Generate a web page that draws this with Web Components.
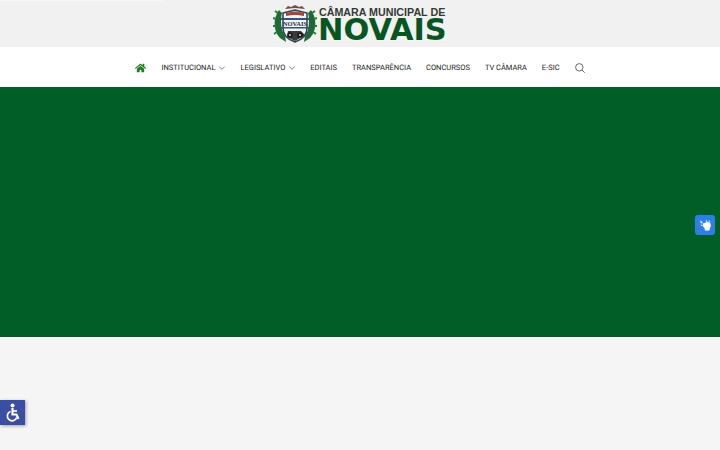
<!DOCTYPE html>
<html lang="pt-BR">
<head>
<meta charset="utf-8">
<title>Câmara Municipal de Novais</title>
<style>
    html, body{
        margin: 0;
        height: 450px;
        overflow: hidden;
        background: #f5f5f5;
        font-family: Roboto, "Liberation Sans", sans-serif;
    }
</style>
</head>
<body>
<site-header></site-header>
<site-nav></site-nav>
<hero-banner></hero-banner>
<libras-button></libras-button>
<access-button></access-button>

<script>
class SiteHeader extends HTMLElement{
    constructor(){
        super();
        this.shadowDOM = this.attachShadow({mode: "open"});
        this.shadowDOM.innerHTML = `
        <style>
            :host{
                display: flex;
                justify-content: center;
                align-items: center;
                height: 47px;
                background: #f1f1f1;
                position: relative;
            }
            #strip{
                position: absolute;
                left: 0;
                top: 0;
                width: 163px;
                height: 1px;
                background: #f8f8f8;
            }
            #logo{
                display: flex;
                align-items: center;
                gap: 2px;
            }
            svg{
                display: block;
            }
            #words{
                display: flex;
                flex-direction: column;
                gap: 1px;
                width: 128px;
            }
            #top{
                font: 700 10.7px/11px "Liberation Sans", sans-serif;
                color: #333a35;
                white-space: nowrap;
            }
            #name{
                font: 700 30.4px/22px "DejaVu Sans", sans-serif;
                color: #07561f;
                white-space: nowrap;
                margin-left: -1px;
            }
        </style>
        <div id="strip"></div>
        <div id="logo">
            <svg width="44" height="40" viewBox="0 0 44 40">
                <path d="M6 6C0 14 0 27 7 34l6 4-1-6C8 27 7 16 9 9z" fill="#1f6b34"/>
                <path d="M38 6c6 8 6 21-1 28l-6 4 1-6c4-5 5-16 3-23z" fill="#1d6a35"/>
                <path d="M5 9 2 7M3 15l-3-1M3 22H0M4 28l-3 2M39 9l3-2M41 15l3-1M41 22h3M40 28l3 2" stroke="#2b7a3f" stroke-width="2"/>
                <path d="M10 9l12-3 12 3v15q0 10-12 14Q10 34 10 24z" fill="#f4f4f2" stroke="#2c3d57" stroke-width="1.500"/>
                <path d="M12 5l3-3 3 1 4-2 4 2 3-1 3 3-10-1z" fill="#7b4c3e"/>
                <path d="M13 9q9-3 18 0v3q-9-2-18 0z" fill="#a2453f"/>
                <path d="M8 14h28v2H8z" fill="#33527f"/>
                <path d="M8 23h28v1.500H8z" fill="#33527f"/>
                <text x="22" y="22" text-anchor="middle" font-family="Liberation Serif" font-size="6.500" font-weight="700" fill="#22324d">NOVAIS</text>
                <path d="M15 27h13l3 3v2l-9 5-8-4z" fill="#3a3a38"/>
                <circle cx="17" cy="31" r="2.800" fill="#1b1b1b"/>
                <circle cx="27" cy="31" r="2.800" fill="#1b1b1b"/>
                <circle cx="17" cy="31" r="1" fill="#ddd"/>
                <circle cx="27" cy="31" r="1" fill="#ddd"/>
            </svg>
            <div id="words">
                <div id="top">CÂMARA MUNICIPAL DE</div>
                <div id="name">NOVAIS</div>
            </div>
        </div>
        `;
    }
}

class NavItem extends HTMLElement{
    constructor(){
        super();
        this.shadowDOM = this.attachShadow({mode: "open"});
        this.shadowDOM.innerHTML = `
        <style>
            :host{
                display: flex;
                align-items: center;
                gap: 4px;
                font: 400 7.5px/1 Roboto, sans-serif;
                color: #222;
                white-space: nowrap;
                text-rendering: geometricPrecision;
            }
            svg{
                display: none;
            }
            :host([drop]) svg{
                display: block;
            }
        </style>
        <slot></slot>
        <svg width="6" height="4" viewBox="0 0 6 4"><path d="M.3.6 3 3.3 5.700.6" fill="none" stroke="#444" stroke-width=".7"/></svg>
        `;
    }
}

class SiteNav extends HTMLElement{
    constructor(){
        super();
        this.shadowDOM = this.attachShadow({mode: "open"});
        this.shadowDOM.innerHTML = `
        <style>
            :host{
                display: flex;
                justify-content: center;
                align-items: center;
                gap: 15px;
                height: 40px;
                box-sizing: border-box;
                padding-top: 1px;
                background: #fff;
            }
            svg{
                display: block;
            }
        </style>
        <svg width="11" height="10" viewBox="0 0 576 512"><path fill="#1f7a1f" d="M280.4 148.3 96 300.1V464a16 16 0 0 0 16 16l112-.3a16 16 0 0 0 15.9-16V368a16 16 0 0 1 16-16h64a16 16 0 0 1 16 16v95.6a16 16 0 0 0 16 16l112 .4a16 16 0 0 0 16-16V300L295.700 148.300a12.200 12.200 0 0 0-15.300 0zM571.600 251.500 488 182.600V44a12 12 0 0 0-12-12h-56a12 12 0 0 0-12 12v72.600L318.500 43a48 48 0 0 0-61 0L4.300 251.500a12 12 0 0 0-1.600 16.900l25.500 31A12 12 0 0 0 45.200 301l235.200-193.700a12.200 12.200 0 0 1 15.300 0L530.900 301a12 12 0 0 0 16.900-1.600l25.500-31a12 12 0 0 0-1.700-16.900z"/></svg>
        <nav-item drop>INSTITUCIONAL</nav-item>
        <nav-item drop>LEGISLATIVO</nav-item>
        <nav-item>EDITAIS</nav-item>
        <nav-item>TRANSPARÊNCIA</nav-item>
        <nav-item>CONCURSOS</nav-item>
        <nav-item>TV CÂMARA</nav-item>
        <nav-item>E-SIC</nav-item>
        <svg width="10" height="10" viewBox="0 0 10 10"><circle cx="4.300" cy="4.300" r="3.700" fill="none" stroke="#444" stroke-width=".8"/><path d="M7 7l2.700 2.700" stroke="#444" stroke-width=".8"/></svg>
        `;
    }
}

class HeroBanner extends HTMLElement{
    constructor(){
        super();
        this.shadowDOM = this.attachShadow({mode: "open"});
        this.shadowDOM.innerHTML = `
        <style>
            :host{
                display: block;
                height: 250px;
                background: #005e26;
            }
        </style>
        `;
    }
}

class LibrasButton extends HTMLElement{
    constructor(){
        super();
        this.shadowDOM = this.attachShadow({mode: "open"});
        this.shadowDOM.innerHTML = `
        <style>
            :host{
                position: fixed;
                left: 695px;
                top: 215px;
                width: 20px;
                height: 20px;
                border-radius: 3px;
                background: #2b7fe6;
            }
            svg{
                display: block;
            }
        </style>
        <svg width="20" height="20" viewBox="0 0 20 20">
            <path d="M5 5.500l2.200.8.500 2.500-2.200-.8zM5.500 9.500l2 .3.300 1.500-1.800-.5z" fill="#d5e6fb"/>
            <path d="M8 8.500l4-1.500 3 .5 1 3-1 2.500-.5 2.500H10l-.5-2.500L8 11.500z" fill="#fff"/>
            <path d="M10.500 5.500l1-.6 1 1.800-1 .5zM13.500 5.500l1-.2.500 1.700-1 .3z" fill="#d5e6fb"/>
        </svg>
        `;
    }
}

class AccessButton extends HTMLElement{
    constructor(){
        super();
        this.shadowDOM = this.attachShadow({mode: "open"});
        this.shadowDOM.innerHTML = `
        <style>
            :host{
                position: fixed;
                left: 0;
                top: 400px;
                width: 25px;
                height: 25px;
                background: #3b4ea6;
                box-shadow: 1px 1px 3px rgba(0,0,0,.35);
            }
            svg{
                display: block;
            }
        </style>
        <svg width="25" height="25" viewBox="0 0 25 25">
            <circle cx="12.500" cy="5.500" r="2" fill="#fff"/>
            <path d="M12.500 8v6.500h4l2 4.500" fill="none" stroke="#fff" stroke-width="2.200"/>
            <path d="M12.500 11h4.500" stroke="#fff" stroke-width="1.700"/>
            <path d="M10.500 11.500a4.800 4.800 0 1 0 6.200 6" fill="none" stroke="#fff" stroke-width="1.700"/>
        </svg>
        `;
    }
}

customElements.define("site-header", SiteHeader);
customElements.define("nav-item", NavItem);
customElements.define("site-nav", SiteNav);
customElements.define("hero-banner", HeroBanner);
customElements.define("libras-button", LibrasButton);
customElements.define("access-button", AccessButton);
</script>
</body>
</html>
